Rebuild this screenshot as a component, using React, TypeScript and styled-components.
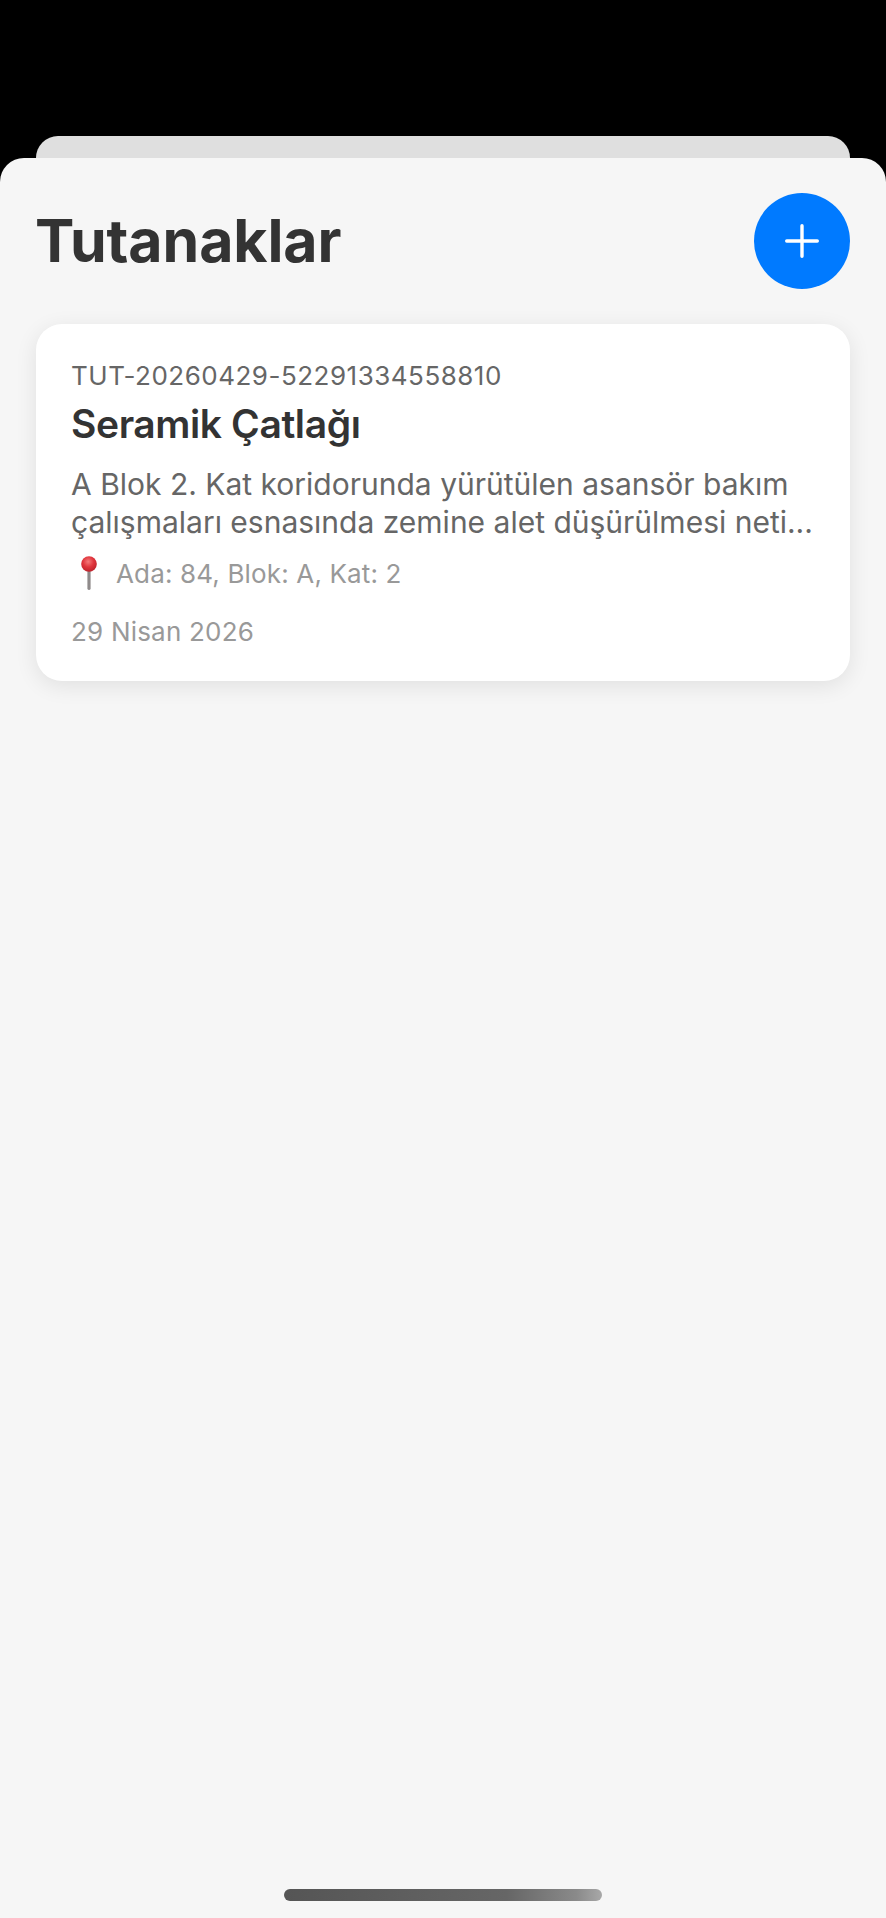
import React from 'react'
import styled, { createGlobalStyle } from 'styled-components'

const GlobalStyle = createGlobalStyle`
  html, body {
    margin: 0;
    padding: 0;
    background: #000;
  }
  * {
    box-sizing: border-box;
  }
  body {
    font-family: Inter, "Noto Sans", "Liberation Sans", sans-serif;
  }
`

const Screen = styled.div`
  width: 886px;
  height: 1918px;
  padding-top: 136px;
  display: flex;
  flex-direction: column;
  background: #000;
  overflow: hidden;
`

const BackSheet = styled.div`
  flex: 0 0 22px;
  margin: 0 36px;
  background: #dfdfdf;
  border-radius: 22px 22px 0 0;
`

const Sheet = styled.div`
  flex: 1;
  display: flex;
  flex-direction: column;
  padding: 35px 36px 17px;
  background: #f6f6f6;
  border-radius: 24px 24px 0 0;
`

const Header = styled.header`
  display: flex;
  align-items: center;
  justify-content: space-between;
  margin-bottom: 35px;
`

const Title = styled.h1`
  margin: 0 0 0 -1px;
  font-size: 59px;
  line-height: 72px;
  font-weight: 700;
  letter-spacing: -0.1px;
  color: #333;
`

const AddButton = styled.button`
  width: 96px;
  height: 96px;
  padding: 0;
  border: 0;
  border-radius: 50%;
  display: flex;
  align-items: center;
  justify-content: center;
  background: #007aff;
`

const Card = styled.article`
  height: 357px;
  padding: 36px 36px 0 35px;
  background: #fff;
  border-radius: 26px;
  box-shadow: 0 5px 22px rgba(0, 0, 0, 0.09);
`

const Code = styled.div`
  font-size: 26px;
  line-height: 32px;
  letter-spacing: 0.5px;
  color: #666;
`

const CardTitle = styled.h2`
  margin: 8px 0 17px;
  font-size: 39px;
  line-height: 48px;
  font-weight: 600;
  letter-spacing: -0.4px;
  color: #333;
`

const Description = styled.p`
  margin: 0 0 11px;
  font-size: 30px;
  line-height: 38px;
  color: #666;
`

const Location = styled.div`
  display: flex;
  align-items: center;
  gap: 12px;
  height: 44px;
  padding-left: 3px;
  font-size: 26px;
  line-height: 32px;
  letter-spacing: 0.15px;
  color: #999;
`

const DateText = styled.div`
  margin-top: 20px;
  font-size: 26px;
  line-height: 32px;
  letter-spacing: 0.2px;
  color: #999;
`

const HomeIndicator = styled.div`
  align-self: center;
  width: 318px;
  height: 12px;
  margin-top: auto;
  border-radius: 6px;
  background: linear-gradient(90deg, #555 0%, #666 70%, #8a8a8a 92%, #a8a8a8 100%);
`

function PlusIcon() {
  return (
    <svg width="34" height="34" viewBox="0 0 34 34" fill="none" stroke="#fff" strokeWidth="3.4" strokeLinecap="round">
      <path d="M17 1.7V32.3M1.7 17H32.3" />
    </svg>
  )
}

function PinIcon() {
  return (
    <svg width="30" height="44" viewBox="0 0 30 44">
      <defs>
        <radialGradient id="pinBall" cx="0.45" cy="0.35" r="0.7">
          <stop offset="0" stopColor="#f47a7a" />
          <stop offset="0.5" stopColor="#e0353c" />
          <stop offset="1" stopColor="#b81f28" />
        </radialGradient>
      </defs>
      <rect x="13.4" y="16" width="3.2" height="22" rx="1.4" fill="#8f8a8a" />
      <circle cx="15" cy="12" r="7.8" fill="url(#pinBall)" />
    </svg>
  )
}

export default function App() {
  return (
    <>
      <GlobalStyle />
      <Screen>
        <BackSheet />
        <Sheet>
          <Header>
            <Title>Tutanaklar</Title>
            <AddButton aria-label="Yeni tutanak">
              <PlusIcon />
            </AddButton>
          </Header>
          <Card>
            <Code>TUT-20260429-52291334558810</Code>
            <CardTitle>Seramik Çatlağı</CardTitle>
            <Description>
              A Blok 2. Kat koridorunda yürütülen asansör bakım çalışmaları esnasında zemine alet düşürülmesi neti...
            </Description>
            <Location>
              <PinIcon />
              <span>Ada: 84, Blok: A, Kat: 2</span>
            </Location>
            <DateText>29 Nisan 2026</DateText>
          </Card>
          <HomeIndicator />
        </Sheet>
      </Screen>
    </>
  )
}
